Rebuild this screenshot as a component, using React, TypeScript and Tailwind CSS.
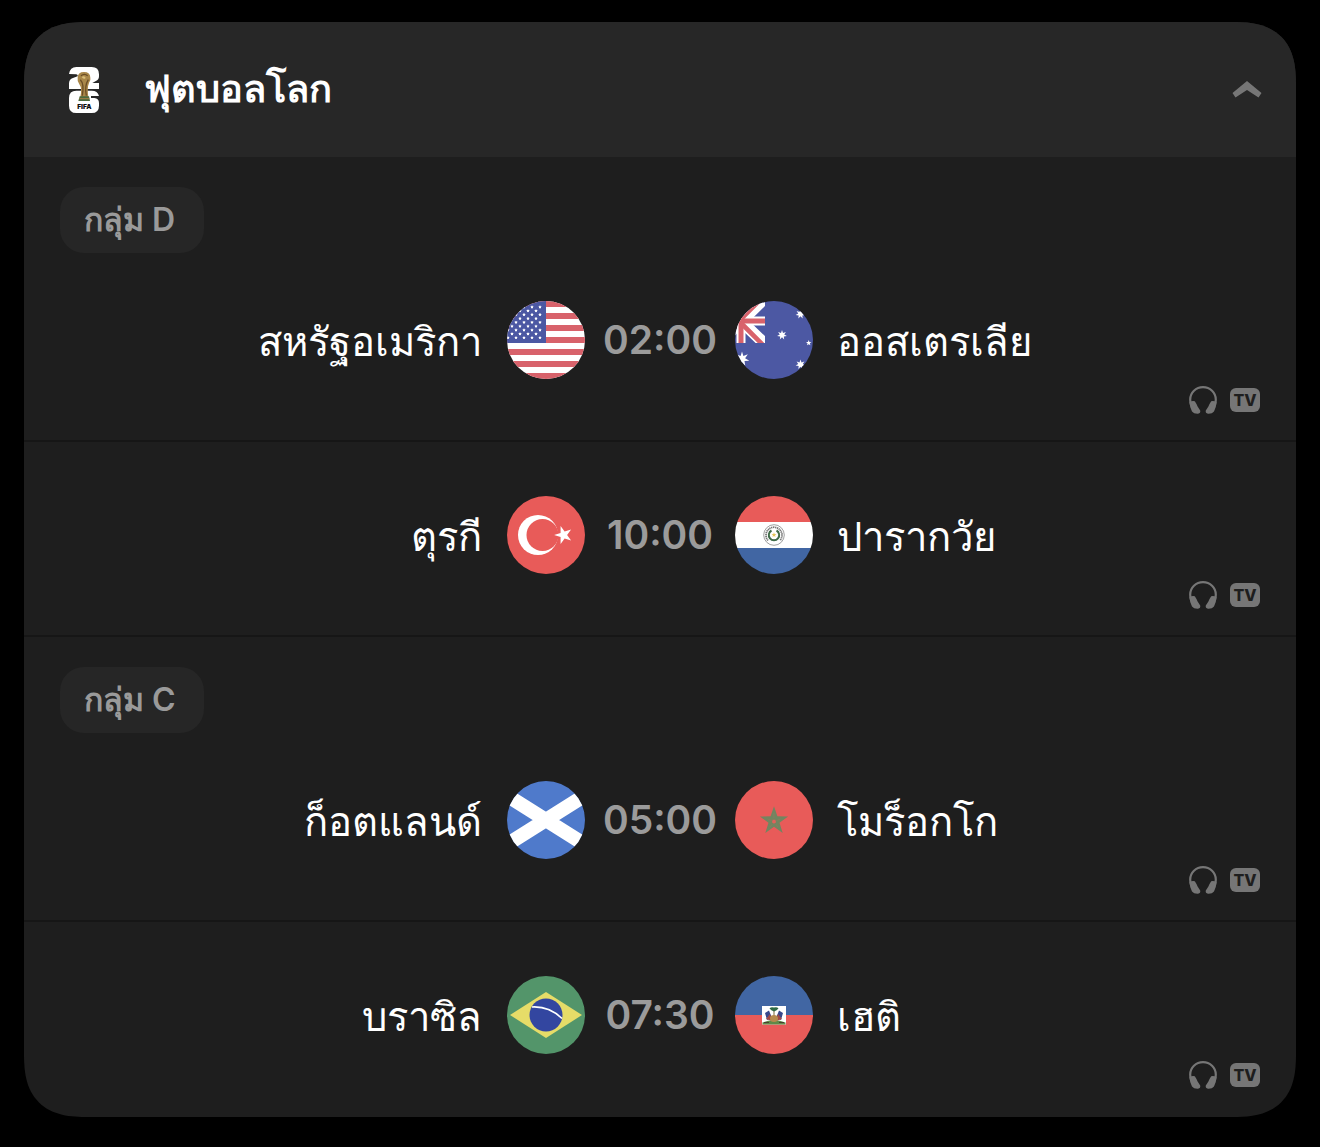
import { useState, type ReactNode } from "react";

function starPoints(cx: number, cy: number, outer: number, inner: number, tips: number, turn = -90) {
  const points: string[] = [];
  for (let i = 0; i < tips * 2; i++) {
    const r = i % 2 === 0 ? outer : inner;
    const a = ((turn + (i * 180) / tips) * Math.PI) / 180;
    points.push(`${(cx + r * Math.cos(a)).toFixed(2)},${(cy + r * Math.sin(a)).toFixed(2)}`);
  }
  return points.join(" ");
}

function Flag({ children }: { children: ReactNode }) {
  return (
    <svg viewBox="0 0 78 78" className="size-[78px] shrink-0 rounded-full" aria-hidden="true">
      {children}
    </svg>
  );
}

function UsaFlag() {
  const stars: [number, number][] = [];
  for (let row = 0; row < 9; row++) {
    for (let col = 0; col < 5; col++) {
      const x = (row % 2 === 0 ? 33 : 29) - col * 8;
      if (x > 0) stars.push([x, 6 + row * 3.84]);
    }
  }
  return (
    <Flag>
      <rect width="78" height="78" fill="#fff" />
      {[0, 12, 24, 36, 48, 60, 72].map((y) => (
        <rect key={y} y={y} width="78" height="6" fill="#d8626b" />
      ))}
      <rect width="39" height="42" fill="#4c58a3" />
      {stars.map(([x, y]) => (
        <polygon key={`${x}-${y}`} points={starPoints(x, y, 1.7, 1, 5)} fill="#fff" />
      ))}
    </Flag>
  );
}

function AustraliaFlag() {
  return (
    <Flag>
      <rect width="78" height="78" fill="#4c58a3" />
      <clipPath id="jack">
        <rect width="30" height="42" />
      </clipPath>
      <g clipPath="url(#jack)">
        <path d="M-18 -3L32 45M-18 44L32 -5" stroke="#fff" strokeWidth="11.5" />
        <path d="M6 0V42M0 20H30" stroke="#fff" strokeWidth="9" />
        <path d="M5 21L32 48M3 21L30 -6" stroke="#d8626b" strokeWidth="4.6" />
        <path d="M6 0V42M0 20H30" stroke="#d8626b" strokeWidth="5" />
        <path d="M0 24V14L9 4H16L4 18Z" fill="#d8626b" />
      </g>
      <g fill="#fff">
        <polygon points={starPoints(47, 34, 5, 2.3, 7)} />
        <polygon points={starPoints(65.5, 13, 5, 2.3, 7)} />
        <polygon points={starPoints(65.5, 63.5, 5, 2.3, 7)} />
        <polygon points={starPoints(73.7, 42, 2.9, 1.2, 5)} />
        <polygon points={starPoints(7, 58, 7.5, 3.2, 7)} />
      </g>
    </Flag>
  );
}

function TurkeyFlag() {
  return (
    <Flag>
      <rect width="78" height="78" fill="#e85b59" />
      <circle cx="31" cy="39" r="20" fill="#fff" />
      <circle cx="35.5" cy="39" r="16" fill="#e85b59" />
      <polygon points={starPoints(56.5, 39, 9.4, 3.6, 5, 180)} fill="#fff" />
    </Flag>
  );
}

function ParaguayFlag() {
  return (
    <Flag>
      <rect width="78" height="26" fill="#e85b59" />
      <rect y="26" width="78" height="26" fill="#fff" />
      <rect y="52" width="78" height="26" fill="#4166a3" />
      <circle cx="39" cy="39" r="10.3" fill="none" stroke="#888" strokeWidth="0.8" />
      <path d="M33 44.5A8 8 0 1 1 45 44.5" fill="none" stroke="#777" strokeWidth="1.8" strokeDasharray="1.3 0.6" />
      <path d="M36.5 34.5A5.2 5.2 0 1 0 41.5 34.5" fill="none" stroke="#3f6b48" strokeWidth="2" />
      <polygon points={starPoints(39, 39, 2.6, 1.1, 5)} fill="#e3c65a" />
    </Flag>
  );
}

function ScotlandFlag() {
  return (
    <Flag>
      <rect width="78" height="78" fill="#4f7acb" />
      <path d="M-8 9.4L86 68.6M-8 68.6L86 9.4" stroke="#fff" strokeWidth="14.2" />
    </Flag>
  );
}

function MoroccoFlag() {
  return (
    <Flag>
      <rect width="78" height="78" fill="#e85b59" />
      <polygon points={starPoints(39, 40, 14.8, 5.8, 5)} fill="#728560" />
      <polygon points={starPoints(39, 40.6, 2.2, 1.8, 5, 90)} fill="#e0625a" />
      <path d="M39 32V37M32.5 38L36.5 39.5M45.5 38L41.5 39.5M35 46L37.5 42.8M43 46L40.5 42.8" stroke="#8d7c5f" strokeWidth="0.8" />
    </Flag>
  );
}

function BrazilFlag() {
  return (
    <Flag>
      <rect width="78" height="78" fill="#53956a" />
      <polygon points="3,39 39,16 75,39 39,62" fill="#e6dc68" />
      <circle cx="39" cy="39" r="16.5" fill="#3346a0" />
      <path d="M25 31Q42 30 55 42.5" fill="none" stroke="#fff" strokeWidth="1.7" />
    </Flag>
  );
}

function HaitiFlag() {
  return (
    <Flag>
      <rect width="78" height="39" fill="#4166a3" />
      <rect y="39" width="78" height="39" fill="#e85b59" />
      <rect x="27" y="30" width="24" height="18.5" fill="#fff" />
      <path d="M27.5 48.5V46.5Q33 44 39 44T50.5 46.5V48.5Z" fill="#5f8a48" />
      <path d="M30 37L34 34.5L37 42L32 44ZM48 37L44 34.5L41 42L46 44Z" fill="#38498c" />
      <path d="M31 43L35 38L37 45ZM47 43L43 38L41 45Z" fill="#a14a46" />
      <path d="M38.5 34H39.5V46H38.5Z" fill="#7b6a3a" />
      <ellipse cx="39" cy="42.5" rx="4" ry="3.5" fill="#b58a4d" />
      <path d="M34.5 32.5Q36 30.5 39 31.5Q42 30.5 43.5 32.5Q42 34.5 39 35.5Q36 34.5 34.5 32.5Z" fill="#2f6b45" />
      <path d="M29 46.5H34M44 46.5H49" stroke="#4a4030" strokeWidth="1.2" />
    </Flag>
  );
}

function CupLogo() {
  return (
    <svg viewBox="0 0 90 138" className="h-[46px] w-[30px] shrink-0" aria-hidden="true">
      <path
        fill="#fff"
        d="M0 21Q3 0 22 0H68Q90 0 90 22V28Q90 38 82 41L70 48H90V66H0V50Q0 38 10 34L26 28Q28 23 22 22Z"
      />
      <path
        fill="#fff"
        d="M22 71H68Q86 71 90 87H66V93H76Q90 94 90 108V116Q90 138 68 138H22Q0 138 0 116V93Q0 71 22 71Z"
      />
      <path
        fill="#a98749"
        d="M26 32Q26 15 45 15Q64 15 64 32Q66 40 60 48Q54 62 58 90H34Q40 64 31 52Q24 42 26 32Z"
      />
      <path d="M36 26Q46 18 56 26M34 38Q46 50 40 86M58 38Q46 56 52 86" stroke="#6a4d25" strokeWidth="4" fill="none" />
      <path d="M38 30Q46 24 50 32Q46 40 38 30Z" fill="#dcc07a" />
      <path d="M32 88H60L63 102H28Z" fill="#4d6a3d" />
      <path d="M31 95H61" stroke="#a58145" strokeWidth="3" />
      <text x="46" y="125" textAnchor="middle" fontFamily="Inter, sans-serif" fontWeight="900" fontSize="20" fill="#111">
        FIFA
      </text>
    </svg>
  );
}

function Headphones() {
  return (
    <svg viewBox="0 0 28 28" className="size-7" role="img" aria-label="Audio">
      <path d="M2.2 20Q1.2 17 1.2 13.5A12.8 12.4 0 0 1 26.8 13.5Q26.8 17 25.8 20" fill="none" stroke="#767676" strokeWidth="2.2" />
      <path
        fill="#767676"
        d="M0.6 16Q3 14.6 5.8 15.2Q7.4 17.5 8.6 20.5L11.2 24.6Q11.8 27.4 9 27.8Q4.8 28 3 25.4Q0.6 21 0.6 16ZM27.4 16Q25 14.6 22.2 15.2Q20.6 17.5 19.4 20.5L16.8 24.6Q16.2 27.4 19 27.8Q23.2 28 25 25.4Q27.4 21 27.4 16Z"
      />
    </svg>
  );
}

type Match = { home: string; away: string; time: string; homeFlag: ReactNode; awayFlag: ReactNode };

const groups: { name: string; matches: Match[] }[] = [
  {
    name: "กลุ่ม D",
    matches: [
      { home: "สหรัฐอเมริกา", away: "ออสเตรเลีย", time: "02:00", homeFlag: <UsaFlag />, awayFlag: <AustraliaFlag /> },
      { home: "ตุรกี", away: "ปารากวัย", time: "10:00", homeFlag: <TurkeyFlag />, awayFlag: <ParaguayFlag /> },
    ],
  },
  {
    name: "กลุ่ม C",
    matches: [
      { home: "ก็อตแลนด์", away: "โมร็อกโก", time: "05:00", homeFlag: <ScotlandFlag />, awayFlag: <MoroccoFlag /> },
      { home: "บราซิล", away: "เฮติ", time: "07:30", homeFlag: <BrazilFlag />, awayFlag: <HaitiFlag /> },
    ],
  },
];

function MatchRow({ match, group }: { match: Match; group?: string }) {
  return (
    <li className="border-b-2 border-[#161616] px-9 pb-[26px] last:border-transparent">
      {group && (
        <h3 className="-mb-1.5 flex pt-[30px]">
          <span className="min-w-36 rounded-3xl bg-[#262626] px-6 py-[9px] text-[32px] leading-[48px] font-semibold text-[#9a9a9a]">
            {group}
          </span>
        </h3>
      )}
      <div className="grid grid-cols-[1fr_78px_150px_78px_1fr] items-center pt-[54px]">
        <span className="pt-1 pr-[25px] text-right text-[40px] leading-[60px] text-white">{match.home}</span>
        {match.homeFlag}
        <time className="text-center text-[39px] leading-[60px] font-semibold text-[#9b9b9b]">{match.time}</time>
        {match.awayFlag}
        <span className="pt-1 pl-6 text-[40px] leading-[60px] text-white">{match.away}</span>
      </div>
      <div className="mt-[7px] flex h-7 items-center justify-end gap-[13px]">
        <Headphones />
        <span className="flex h-6 w-[30px] items-center justify-center rounded-md bg-[#767676] text-base font-extrabold text-[#1e1e1e]">
          TV
        </span>
      </div>
    </li>
  );
}

export default function App() {
  const [open, setOpen] = useState(true);
  return (
    <main className="min-h-screen bg-black px-6 pt-[22px] pb-[30px] font-['Inter',sans-serif]">
      <section className="overflow-hidden rounded-[54px] bg-[#1e1e1e] supports-[corner-shape:squircle]:rounded-[64px] supports-[corner-shape:squircle]:[corner-shape:superellipse(1.4)]">
        <h2>
          <button
            type="button"
            aria-expanded={open}
            onClick={() => setOpen(!open)}
            className="flex h-[135px] w-full items-center bg-[#272727] pr-[34px] pl-[45px] text-left"
          >
            <CupLogo />
            <span className="ml-[45px] flex-1 pb-1 text-[38px] leading-[60px] font-semibold text-white">ฟุตบอลโลก</span>
            <svg viewBox="0 0 30 18" className={open ? "h-[18px] w-[30px]" : "h-[18px] w-[30px] rotate-180"} aria-hidden="true">
              <path d="M0.5 12L15 0L29.5 12L26.5 16.5L15 9L3.5 16.5Z" fill="#767676" />
            </svg>
          </button>
        </h2>
        {open && (
          <ul>
            {groups.flatMap((g) =>
              g.matches.map((m, i) => <MatchRow key={m.home} match={m} group={i === 0 ? g.name : undefined} />),
            )}
          </ul>
        )}
      </section>
    </main>
  );
}
